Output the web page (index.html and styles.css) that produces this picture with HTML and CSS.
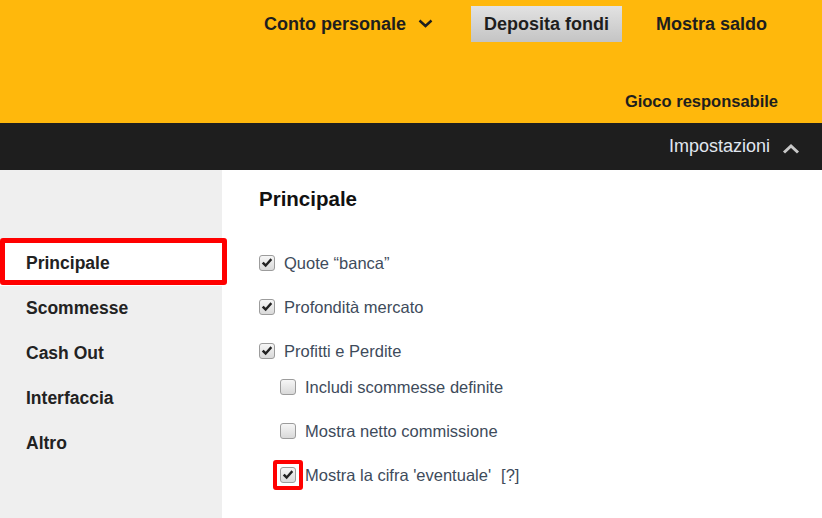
FILE: index.html
```html
<!DOCTYPE html>
<html lang="it">
<head>
<meta charset="UTF-8">
<meta name="viewport" content="width=device-width, initial-scale=1.0">
<title>Impostazioni</title>
<link rel="stylesheet" href="styles.css">
</head>
<body>

<header>
<div class="top">
<div class="account">Conto personale
<svg class="chev-down" width="15" height="9" viewBox="0 0 15 9"><path d="M1.5 1.5 L7.5 7 L13.5 1.5" fill="none" stroke="#1e1e1e" stroke-width="2.4"/></svg>
</div>
<div class="deposit">Deposita fondi</div>
<div class="balance">Mostra saldo</div>
</div>
<div class="resp">Gioco responsabile</div>
</header>

<div class="settings-bar">
<span>Impostazioni</span>
<svg class="chev-up" width="18" height="11" viewBox="0 0 18 11"><path d="M2 9.5 L9 3 L16 9.5" fill="none" stroke="#c8c8c8" stroke-width="3"/></svg>
</div>

<div class="page">

<!-- Menu -->
<ul class="menu">
<li class="active">Principale</li>
<li>Scommesse</li>
<li>Cash Out</li>
<li>Interfaccia</li>
<li>Altro</li>
</ul>

<!-- Principale -->
<section class="content">
<h2>Principale</h2>

<div class="row"><span class="cb on"></span>Quote “banca”</div>
<div class="row"><span class="cb on"></span>Profondità mercato</div>
<div class="row"><span class="cb on"></span>Profitti e Perdite</div>

<div class="sub">
<div class="row"><span class="cb"></span>Includi scommesse definite</div>
<div class="row"><span class="cb"></span>Mostra netto commissione</div>
<div class="row"><span class="cb on marked"></span>Mostra la cifra 'eventuale'<span class="help">[?]</span></div>
</div>
</section>

</div>

</body>
</html>
```

FILE: styles.css
```css
body{
margin:0;
font-family:"Liberation Sans", Arial, Helvetica, sans-serif;
background:white;
color:#1e1e1e;
overflow:hidden;
}

/* Header giallo */
header{
background:#ffb80c;
height:123px;
}

.top{
display:flex;
align-items:center;
height:48px;
padding-left:264px;
font-size:18px;
font-weight:bold;
}

.account{
display:flex;
align-items:center;
}

.chev-down{
margin-left:12px;
margin-top:-2px;
}

.deposit{
margin-left:38px;
height:36px;
line-height:36px;
padding:0 13px;
background:linear-gradient(#e2e2e2,#c4c4c4);
}

.balance{
margin-left:34px;
}

.resp{
text-align:right;
padding:44px 44px 0 0;
font-size:16.5px;
font-weight:bold;
line-height:18px;
}

/* Barra impostazioni */
.settings-bar{
background:#1e1e1e;
height:47px;
display:flex;
justify-content:flex-end;
align-items:center;
padding-right:22px;
color:#e0e7ef;
font-size:18px;
}

.chev-up{
margin-left:12px;
margin-top:3px;
}

/* Pagina */
.page{
display:flex;
height:348px;
}

.menu{
width:222px;
flex-shrink:0;
background:#efefef;
list-style:none;
margin:0;
padding:71px 0 0 0;
}

.menu li{
position:relative;
height:45px;
line-height:45px;
padding-left:26px;
font-size:17.5px;
font-weight:bold;
color:#222;
}

.menu li.active{
background:white;
}

.menu li.active::after{
content:"";
position:absolute;
left:0;
right:-5px;
top:-3px;
bottom:1px;
border:5px solid #ff0000;
border-radius:3px;
}

.content{
flex:1;
padding:17px 0 0 37px;
}

.content h2{
margin:0 0 30px 0;
font-size:20.5px;
line-height:24px;
color:#111;
}

.row{
display:flex;
align-items:center;
height:44px;
font-size:16.5px;
color:#3e4b5b;
}

.sub{
margin-top:-8px;
padding-left:21px;
}

/* Checkbox */
.cb{
position:relative;
width:14px;
height:14px;
border:1px solid #9c9c9c;
border-radius:3px;
background:linear-gradient(#f6f6f6,#d9d9d9);
margin-right:9px;
flex-shrink:0;
}

.cb.on::before{
content:"";
position:absolute;
left:1px;
top:1px;
width:12px;
height:12px;
background:url("data:image/svg+xml;utf8,<svg xmlns='http://www.w3.org/2000/svg' viewBox='0 0 12 12'><path d='M0.8 6.4 L2.6 4.7 L4.7 6.8 L9.5 1.3 L11.2 2.9 L4.7 10.2 Z' fill='%23222'/></svg>") no-repeat;
}

.cb.marked::after{
content:"";
position:absolute;
left:-8px;
top:-8px;
width:22px;
height:22px;
border:4px solid #ff0000;
border-radius:3px;
}

.help{
margin-left:10px;
}
```
